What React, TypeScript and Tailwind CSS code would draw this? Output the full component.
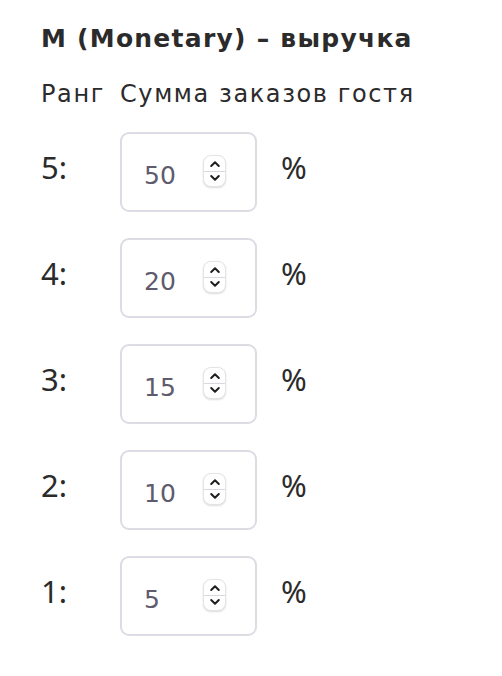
import React from "react";

const ranks = [
  { rank: 5, value: 50 },
  { rank: 4, value: 20 },
  { rank: 3, value: 15 },
  { rank: 2, value: 10 },
  { rank: 1, value: 5 },
];

const wide = { fontFamily: '"DejaVu Sans", "Liberation Sans", sans-serif' };
const narrow = { fontFamily: '"Noto Sans", "Liberation Sans", sans-serif' };

function Spinner() {
  return (
    <div className="mt-[21px] w-[23px] h-[32px] rounded-[8px] bg-white border border-[#e4e3e8] shadow-[0_1px_2px_rgba(0,0,0,0.14)] flex flex-col overflow-hidden">
      <div className="flex-1 flex items-center justify-center pt-[1px]">
        <svg width="12" height="8" viewBox="0 0 12 8" fill="none">
          <path d="M2.2 6 L6 2.2 L9.8 6" stroke="#1f1f1f" strokeWidth="2" strokeLinecap="round" strokeLinejoin="round" />
        </svg>
      </div>
      <div className="h-px bg-[#d9d8de]" />
      <div className="flex-1 flex items-center justify-center pb-[1px]">
        <svg width="12" height="8" viewBox="0 0 12 8" fill="none">
          <path d="M2.2 2 L6 5.8 L9.8 2" stroke="#1f1f1f" strokeWidth="2" strokeLinecap="round" strokeLinejoin="round" />
        </svg>
      </div>
    </div>
  );
}

export default function App() {
  return (
    <div className="min-h-[676px] w-[502px] bg-white text-[#2b2b2b] pl-[41px] pt-[24px]">
      <h2 style={wide} className="text-[25px] leading-[30px] font-semibold tracking-[1.25px]">
        M (Monetary) – выручка
      </h2>
      <div style={wide} className="flex mt-[25px] text-[24px] leading-[30px] tracking-[1.6px]">
        <div className="w-[79px]">Ранг</div>
        <div>Сумма заказов гостя</div>
      </div>
      <div className="flex flex-col gap-[26px] mt-[23px]">
        {ranks.map((r) => (
          <div key={r.rank} className="flex items-start">
            <div style={narrow} className="w-[79px] pt-[18px] text-[31px] leading-[34px]">
              {r.rank}:
            </div>
            <div className="w-[137px] h-[80px] rounded-[9px] border-2 border-[#dddbe3] flex items-start justify-between pl-[22px] pr-[29px]">
              <span style={wide} className="mt-[27px] text-[25px] leading-[30px] text-[#5e5b6d]">
                {r.value}
              </span>
              <Spinner />
            </div>
            <div style={narrow} className="pl-[24px] pt-[18px] text-[31px] leading-[34px]">
              %
            </div>
          </div>
        ))}
      </div>
    </div>
  );
}
